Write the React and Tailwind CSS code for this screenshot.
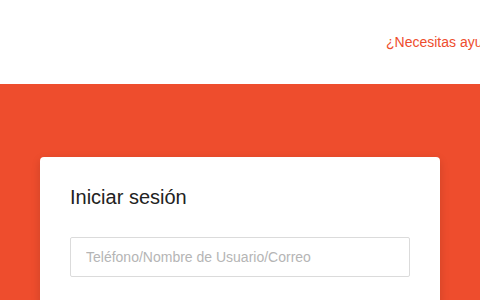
export default function App() {
  return (
    <div className="w-[480px] h-[300px] overflow-hidden bg-white" style={{ fontFamily: '"Liberation Sans", Arial, sans-serif' }}>
      <header className="h-[84px] bg-white flex items-center pl-[386px] overflow-hidden">
        <a className="text-[14px] text-[#ee4d2d] whitespace-nowrap leading-none">¿Necesitas ayuda?</a>
      </header>
      <main className="bg-[#ee4d2d] h-[600px] pt-[73px] px-[40px]">
        <div className="w-[400px] bg-white rounded-[4px] shadow-[0_3px_10px_0_rgba(0,0,0,0.14)] px-[30px] pt-[28px] pb-[30px]">
          <div className="text-[20px] leading-[24px] text-[#222]">Iniciar sesión</div>
          <div className="mt-[28px] h-[40px] border border-[#dbdbdb] rounded-[2px] flex items-center px-[15px]">
            <input
              className="w-full outline-none text-[14px] text-[#222] placeholder:text-[#b5b5b5] bg-transparent"
              placeholder="Teléfono/Nombre de Usuario/Correo"
            />
          </div>
        </div>
      </main>
    </div>
  );
}
